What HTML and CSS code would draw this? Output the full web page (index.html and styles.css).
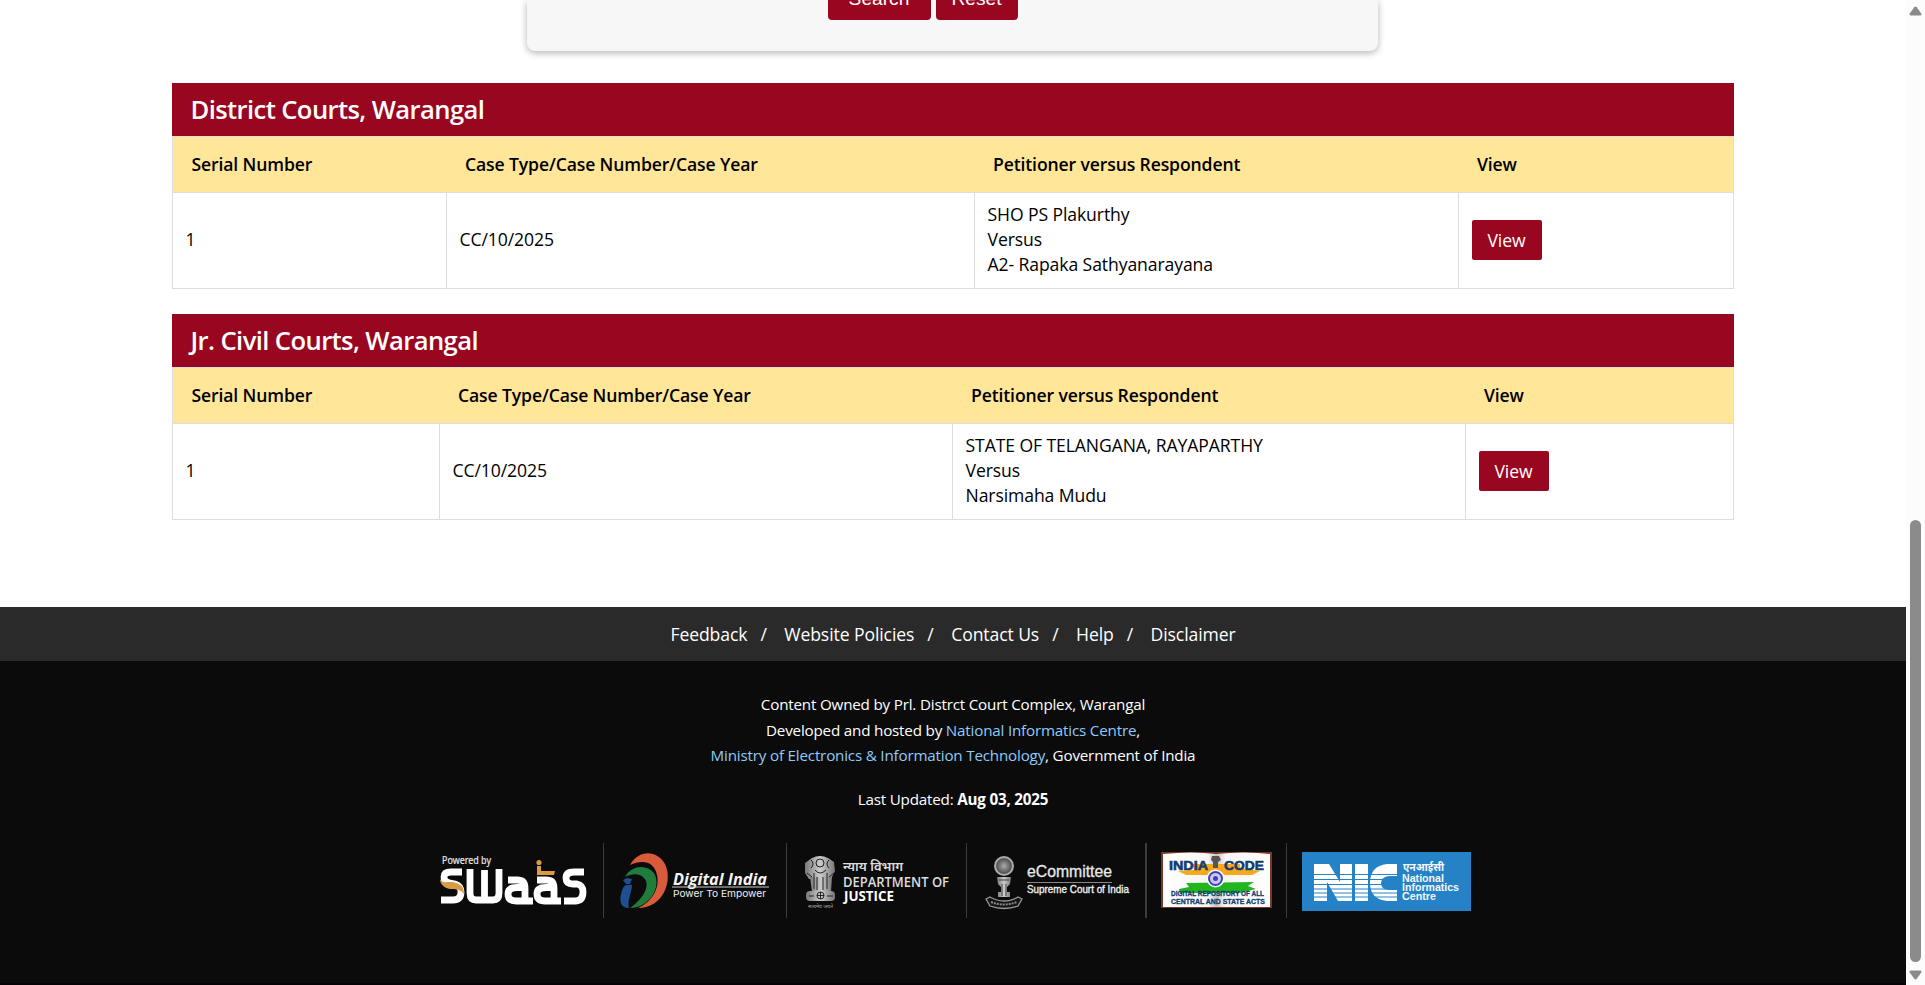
FILE: index.html
```html
<!DOCTYPE html>
<html lang="en">
<head>
<meta charset="utf-8">
<title>District Court Warangal</title>
<link rel="stylesheet" href="styles.css">
</head>
<body>
<div class="window">
<div class="page">
  <main class="content">
    <form class="search-panel">
      <button type="button" class="btn btn-search">Search</button>
      <button type="button" class="btn btn-reset">Reset</button>
    </form>
    <section class="court">
      <h2 class="court-title">District Courts, Warangal</h2>
      <table class="cases district">
        <colgroup><col class="c1"><col class="c2"><col class="c3"><col class="c4"></colgroup>
        <thead><tr><th>Serial Number</th><th>Case Type/Case Number/Case Year</th><th>Petitioner versus Respondent</th><th>View</th></tr></thead>
        <tbody><tr><td>1</td><td>CC/10/2025</td><td>SHO PS Plakurthy<br>Versus<br>A2- Rapaka Sathyanarayana</td><td><a class="view">View</a></td></tr></tbody>
      </table>
    </section>
    <section class="court">
      <h2 class="court-title">Jr. Civil Courts, Warangal</h2>
      <table class="cases civil">
        <colgroup><col class="c1"><col class="c2"><col class="c3"><col class="c4"></colgroup>
        <thead><tr><th>Serial Number</th><th>Case Type/Case Number/Case Year</th><th>Petitioner versus Respondent</th><th>View</th></tr></thead>
        <tbody><tr><td>1</td><td>CC/10/2025</td><td>STATE OF TELANGANA, RAYAPARTHY<br>Versus<br>Narsimaha Mudu</td><td><a class="view">View</a></td></tr></tbody>
      </table>
    </section>
  </main>
  <nav class="footer-nav">
    <a>Feedback</a><a>Website Policies</a><a>Contact Us</a><a>Help</a><a>Disclaimer</a>
  </nav>
  <footer class="footer">
    <p class="owner">Content Owned by Prl. Distrct Court Complex, Warangal<br>Developed and hosted by <a>National Informatics Centre</a>,<br><a>Ministry of Electronics &amp; Information Technology</a>, Government of India</p>
    <p class="updated">Last Updated: <strong>Aug 03, 2025</strong></p>
    <svg class="logos" width="1066" height="75" viewBox="420 843 1066 75">
      <defs>
        <linearGradient id="metal" x1="0" x2="1"><stop offset="0" stop-color="#777"/><stop offset=".5" stop-color="#ccc"/><stop offset="1" stop-color="#777"/></linearGradient>
        <radialGradient id="wheel"><stop offset="0" stop-color="#aaa"/><stop offset=".8" stop-color="#555"/><stop offset="1" stop-color="#777"/></radialGradient>
        <linearGradient id="leaf" x1="0" x2="1"><stop offset="0" stop-color="#fff"/><stop offset=".42" stop-color="#f6f6f6"/><stop offset=".5" stop-color="#c4c4c4"/><stop offset=".58" stop-color="#f6f6f6"/><stop offset="1" stop-color="#fff"/></linearGradient>
      </defs>
      <g fill="#3d3d3d">
        <rect x="603" y="843" width="1" height="75"/><rect x="786" y="843" width="1" height="75"/><rect x="966" y="843" width="1" height="75"/><rect x="1145" y="843" width="2" height="75"/><rect x="1286" y="843" width="1" height="75"/>
      </g>

      <!-- SWaaS -->
      <text x="442" y="864" class="noto" font-size="11" fill="#e8e8e8" stroke="#e8e8e8" stroke-width=".2" textLength="49" lengthAdjust="spacingAndGlyphs">Powered by</text>
      <g fill="none" stroke="#fff" stroke-width="6.800">
        <path d="M462 872H451Q444 872 444 877Q444 882 450 883L455 884Q461 886 461 892Q461 900 453 900H441"/>
        <path d="M470 869V893Q470 900 476 900H493Q499 900 499 893V869M484.500 870V900"/>
        <path d="M508 880H517Q525 880 525 888V903M525 887.500H517Q508 887.500 508 894Q508 901 516 901H525M525 901H533"/>
        <path d="M537 880H546Q554 880 554 888V903M554 887.500H546Q537 887.500 537 894Q537 901 545 901H554M552 901H561"/>
        <path d="M584 872H574Q566 872 566 878Q566 884 573 884H577Q583 885 583 892Q583 901 575 901H564"/>
      </g>
      <path d="M440 879C443 885 449 880 456 883C462 885 464 888 464 894C460 889 455 889 450 889C444 888 440 884 440 879Z" fill="#d99b45"/>
      <circle cx="539" cy="862.500" r="2.600" fill="#d99b45"/><path d="M537 866H541V871H555L554 875H537Z" fill="#d99b45"/>

      <!-- Digital India -->
      <path d="M630 865C639 849 657 850 665 864C673 880 664 908 638 908C652 902 660 888 657 875C654 860 641 860 630 865Z" fill="#d85b3b"/>
      <path d="M625 877C631 865 647 864 654 873C662 886 650 908 630 908C640 901 649 890 646 881C643 874 634 872 625 877Z" fill="#1f7c3b"/>
      <path d="M624 886Q628 884 632 885C632 893 627 899 629 908C618 908 619 896 624 886Z" fill="#1e4f93"/><path d="M623 880L627 878L632 879L630 884H626Z" fill="#1e4f93"/>
      <text x="673" y="885" class="open bold italic" font-size="16" fill="#f4f4f4" textLength="94" lengthAdjust="spacingAndGlyphs">Digital India</text>
      <path d="M672 887H769" stroke="#ccc" stroke-width="1.200"/>
      <text x="673" y="897" class="inter" font-size="9.500" fill="#f0f0f0" textLength="93" lengthAdjust="spacingAndGlyphs">Power To Empower</text>

      <!-- Department of Justice -->
      <g fill="url(#metal)">
        <path d="M812 858Q820 854 828 858L834 862L835 871L831 879H809L805 873L805 863Z"/>
        <path d="M810 877H832L831 892H812Z"/>
        <rect x="806" y="891" width="29" height="10" rx="4"/>
      </g>
      <g fill="none" stroke="#222" stroke-width="1">
        <circle cx="820" cy="863" r="4"/><path d="M811 860Q815 864 811 868M829 860Q825 864 829 868M815 870Q820 876 826 870M814 873V889M817 877V890M823 877V890M827 873V889M807 873L812 877M834 873L829 877"/>
        <circle cx="820.500" cy="895.500" r="3.500"/><path d="M820.500 892V899M817 895.500H824M809 896H814M827 896H833"/>
      </g>
      <text x="808" y="908" class="noto" font-size="5" fill="#aaa" textLength="25" lengthAdjust="spacingAndGlyphs">सत्यमेव जयते</text>
      <text x="843" y="871" class="noto semi" font-size="12.500" fill="#ddd" textLength="60" lengthAdjust="spacingAndGlyphs">न्याय विभाग</text>
      <text x="843" y="887" class="open semi" font-size="13.500" fill="#ddd" textLength="106" lengthAdjust="spacingAndGlyphs">DEPARTMENT OF</text>
      <text x="844" y="901" class="open bold" font-size="13.500" fill="#fff" textLength="50" lengthAdjust="spacingAndGlyphs">JUSTICE</text>

      <!-- eCommittee -->
      <circle cx="1004" cy="866" r="9" fill="url(#wheel)" stroke="#aaa" stroke-width="2"/>
      <path d="M997 877H1011L1010 884L1007 887V892H1010V897H998V892H1001V887L998 884Z" fill="url(#metal)"/>
      <path d="M999 880H1009M1002 884V896M1006 884V896" stroke="#444" stroke-width="1"/>
      <path d="M986 899L990 897Q1004 905 1018 897L1022 899L1018 906Q1004 911 990 906Z" fill="#151515" stroke="#999" stroke-width="1.300"/>
      <path d="M991 902Q1004 907 1017 902" fill="none" stroke="#888" stroke-width="2" stroke-dasharray="2 1"/>
      <text x="1027" y="877" class="sans" font-size="16" fill="#e8e8e8" stroke="#e8e8e8" stroke-width=".3" textLength="85" lengthAdjust="spacingAndGlyphs">eCommittee</text>
      <path d="M1027 882.500H1112" stroke="#888"/>
      <text x="1027" y="893" class="sans" font-size="10.500" fill="#f0f0f0" stroke="#f0f0f0" stroke-width=".35" textLength="102" lengthAdjust="spacingAndGlyphs">Supreme Court of India</text>

      <!-- India Code -->
      <rect x="1161" y="852" width="111" height="56" fill="#7a3822"/>
      <path d="M1163 854Q1192 851 1216 854Q1244 851 1270 854V907H1163Z" fill="url(#leaf)"/>
      <path d="M1193 864H1240V868L1260 871L1252 875H1207L1186 875L1178 871L1194 870Z" fill="#f8a91b"/>
      <path d="M1186 883L1254 882L1248 886L1256 889L1240 893L1180 893L1179 889L1189 887Z" fill="#21b51f"/>
      <circle cx="1215.500" cy="878.500" r="9" fill="#fff"/><circle cx="1215.500" cy="878.500" r="6.500" fill="#c9c9f4" stroke="#4340b8" stroke-width="2"/><circle cx="1215.500" cy="878.500" r="2.500" fill="#4340b8"/>
      <path d="M1212 856H1219L1221 860L1218 862V868H1213V862L1211 860Z" fill="#555"/>
      <text x="1169" y="870" class="sans bold" font-size="13.500" fill="#133b70" stroke="#133b70" stroke-width=".6" textLength="39" lengthAdjust="spacingAndGlyphs">INDIA</text>
      <text x="1224" y="870" class="sans bold" font-size="13.500" fill="#133b70" stroke="#133b70" stroke-width=".6" textLength="40" lengthAdjust="spacingAndGlyphs">CODE</text>
      <text x="1171" y="896" class="sans bold" font-size="6.800" fill="#133b70" stroke="#133b70" stroke-width=".3" textLength="93" lengthAdjust="spacingAndGlyphs">DIGITAL REPOSITORY OF ALL</text>
      <text x="1171" y="904" class="sans bold" font-size="6.800" fill="#133b70" stroke="#133b70" stroke-width=".3" textLength="94" lengthAdjust="spacingAndGlyphs">CENTRAL AND STATE ACTS</text>

      <!-- NIC -->
      <rect x="1302" y="852" width="169" height="59" fill="#2682c6"/>
      <g fill="#fff">
        <path d="M1314 864H1329L1340 882V864H1352V901H1338L1327 882V901H1314Z"/><path d="M1355 864H1368V901H1355Z"/><path d="M1397 864V876H1389Q1381 877 1381 883Q1381 889 1388 890H1397V901H1387Q1370 899 1370 883Q1370 866 1387 864Z"/>
      </g>
      <path d="M1313 874.500H1398M1313 879.500H1398M1313 884.500H1398M1313 889H1398M1313 893H1398M1313 897H1398" stroke="#2682c6" stroke-width="1"/>
      <g fill="#f2f8fd">
        <text x="1403" y="871" class="noto bold" font-size="11" textLength="41" lengthAdjust="spacingAndGlyphs">एनआईसी</text>
        <text x="1402" y="881.500" class="sans bold" font-size="10" textLength="42" lengthAdjust="spacingAndGlyphs">National</text>
        <text x="1402" y="890.500" class="sans bold" font-size="10" textLength="57" lengthAdjust="spacingAndGlyphs">Informatics</text>
        <text x="1402" y="900" class="sans bold" font-size="10" textLength="34" lengthAdjust="spacingAndGlyphs">Centre</text>
      </g>
    </svg>
  </footer>
</div>
<div class="scrollbar">
  <svg width="13" height="10" viewBox="0 0 13 10"><path d="M5.200 1.200Q6.500 -.3 7.800 1.200L12.300 7.500Q13 9.500 11 9.500H2Q0 9.500 .7 7.500Z" fill="#8b8b8b"/></svg>
  <div class="thumb"></div>
  <svg class="down" width="13" height="10" viewBox="0 0 13 10"><path d="M5.200 8.800Q6.500 10.300 7.800 8.800L12.300 2.500Q13 .5 11 .5H2Q0 .5 .7 2.500Z" fill="#8b8b8b"/></svg>
</div>
</div>
</body>
</html>
```
FILE: styles.css
```css
* { box-sizing: border-box; }
body { margin: 0; background: #fff; color: #000; font-family: "Open Sans", "Noto Sans", sans-serif; font-size: 17.6px; letter-spacing: -.1px; line-height: 25px; }
.window { display: flex; width: 1925px; height: 985px; overflow: hidden; }
.page { width: 1906px; height: 985px; display: flex; flex-direction: column; }
.content { width: 1562px; height: 607px; margin: 0 auto; display: flex; flex-direction: column; flex: none; }
.search-panel { width: 851px; height: 51px; margin: 0 0 32px 355px; background: #f7f7f7; border-radius: 0 0 8px 8px; box-shadow: 0 2px 7px rgba(0,0,0,.3); display: flex; justify-content: center; align-items: flex-end; gap: 5px; padding: 0 60px 31px 0; }
.btn { height: 42px; flex: none; border: 0; background: #99061f; color: #fff; font: 19.2px/22px "Liberation Sans", Arial, sans-serif; border-radius: 4px; padding: 0; }
.btn-search { width: 103px; }
.btn-reset { width: 82px; }
.court { margin-bottom: 25px; }
.court-title { margin: 0; height: 53px; padding: 0 18.5px; background: #99061f; color: #fff; font-size: 25.6px; letter-spacing: -.6px; line-height: 53px; font-weight: 600; }
.cases { width: 1562px; table-layout: fixed; border-collapse: collapse; border: 1px solid #ddd; }
.cases th { height: 56px; padding: 0 18.5px 1px; text-align: left; font-weight: 600; letter-spacing: -.13px; background: #ffe699; border: 1px solid #ddd; border-width: 1px 0; }
.cases td { height: 96px; padding: 0 12.5px 2px; border: 1px solid #ddd; }
.district .c1 { width: 274px; }
.district .c2 { width: 528px; }
.district .c3 { width: 484px; }
.civil .c1 { width: 267px; }
.civil .c2 { width: 513px; }
.civil .c3 { width: 513px; }
.view { display: inline-block; width: 70px; height: 40px; line-height: 40px; text-align: center; background: #99061f; color: #fff; border-radius: 2px; vertical-align: middle; }
.footer-nav { height: 54px; flex: none; background: #2a2a2a; color: #fff; display: flex; justify-content: center; line-height: 54px; }
.footer-nav a + a::before { content: "/"; margin: 0 17.5px 0 13px; }
.footer { flex: 1; background: #0b0b0b; color: #fff; font-size: 15.2px; letter-spacing: -.19px; line-height: 25.5px; text-align: center; border-bottom: 2px solid #080008; }
.footer p { margin: 0; }
.footer a { color: #90caf9; }
.owner { padding-top: 31px; }
.footer .updated { margin-top: 18px; }
.logos { display: block; margin: 30.5px auto 0; letter-spacing: 0; }
.noto { font-family: "Noto Sans", sans-serif; }
.open { font-family: "Open Sans", sans-serif; }
.inter { font-family: Inter, sans-serif; }
.sans { font-family: "Liberation Sans", Arial, sans-serif; }
.bold { font-weight: 700; }
.semi { font-weight: 600; }
.italic { font-style: italic; }
.scrollbar { width: 19px; height: 985px; background: #fcfcfc; display: flex; flex-direction: column; align-items: center; padding-top: 6px; }
.scrollbar svg { display: block; flex: none; }
.thumb { width: 11px; height: 442px; margin-top: 504px; background: #8b8b8b; border-radius: 6px; flex: none; }
.down { margin-top: 8px; }
```
